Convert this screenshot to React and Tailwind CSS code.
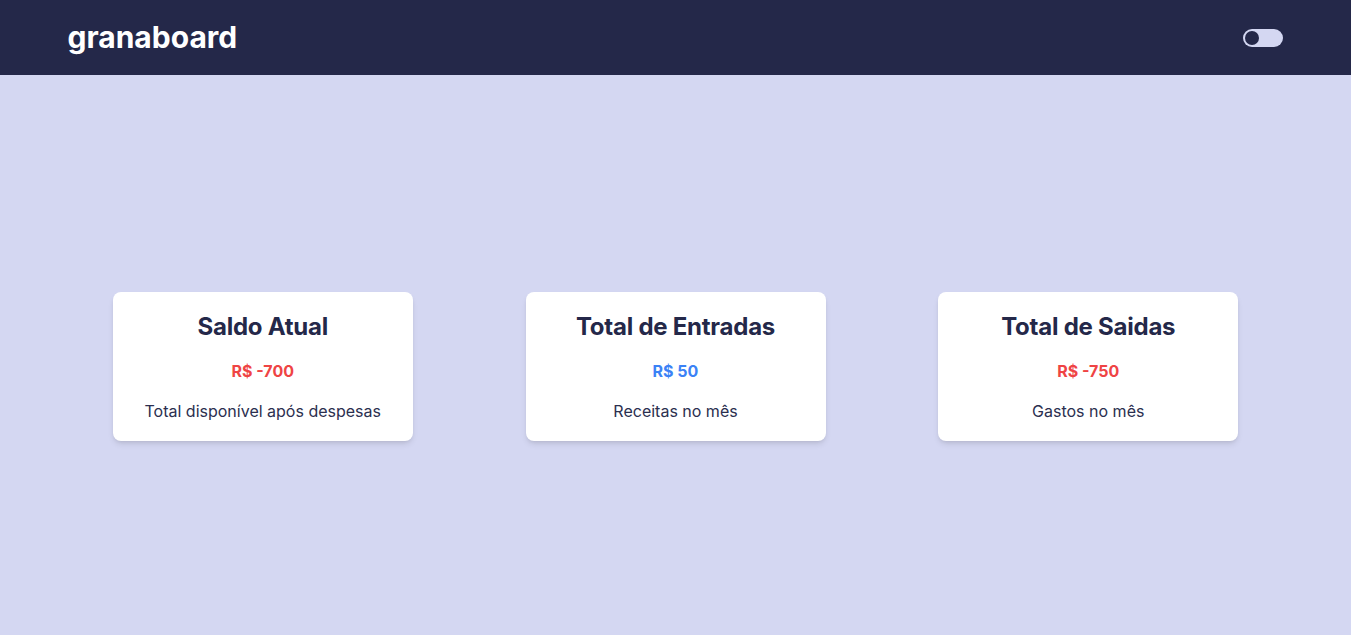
import React, { useState } from 'react';

const cards = [
    { title: 'Saldo Atual', value: 'R$ -700', color: 'text-[#ef4444]', desc: 'Total disponível após despesas' },
    { title: 'Total de Entradas', value: 'R$ 50', color: 'text-[#3b82f6]', desc: 'Receitas no mês' },
    { title: 'Total de Saidas', value: 'R$ -750', color: 'text-[#ef4444]', desc: 'Gastos no mês' },
];

const App = () => {
    const [dark, setDark] = useState(false);

    return (
        <div className="min-h-screen flex flex-col bg-[#d4d7f2] font-['Inter',sans-serif]">
            <header className="h-[75px] bg-[#242849]">
                <div className="max-w-7xl mx-auto px-8 h-full flex items-center justify-between">
                    <h1 className="text-3xl font-bold text-white -mt-px">granaboard</h1>
                    <button
                        onClick={() => setDark(!dark)}
                        className="w-10 h-[18px] rounded-full bg-[#d4d7f2] flex items-center px-[2px] mr-px"
                    >
                        <span className={`w-[14px] h-[14px] rounded-full bg-[#242849] ${dark ? 'ml-auto' : ''}`} />
                    </button>
                </div>
            </header>

            <main className="flex-1 flex items-center justify-evenly pt-[23px]">
                {cards.map((card) => (
                    <div
                        key={card.title}
                        className="w-[300px] bg-white rounded-lg shadow-md pt-[19px] pb-[18px] flex flex-col items-center gap-4 text-center"
                    >
                        <h2 className="text-2xl font-bold tracking-[-0.01em] text-[#242849]">{card.title}</h2>
                        <p className={`text-base font-bold ${card.color}`}>{card.value}</p>
                        <p className="text-base text-[#2b2f4f]">{card.desc}</p>
                    </div>
                ))}
            </main>
        </div>
    );
};

export default App;
